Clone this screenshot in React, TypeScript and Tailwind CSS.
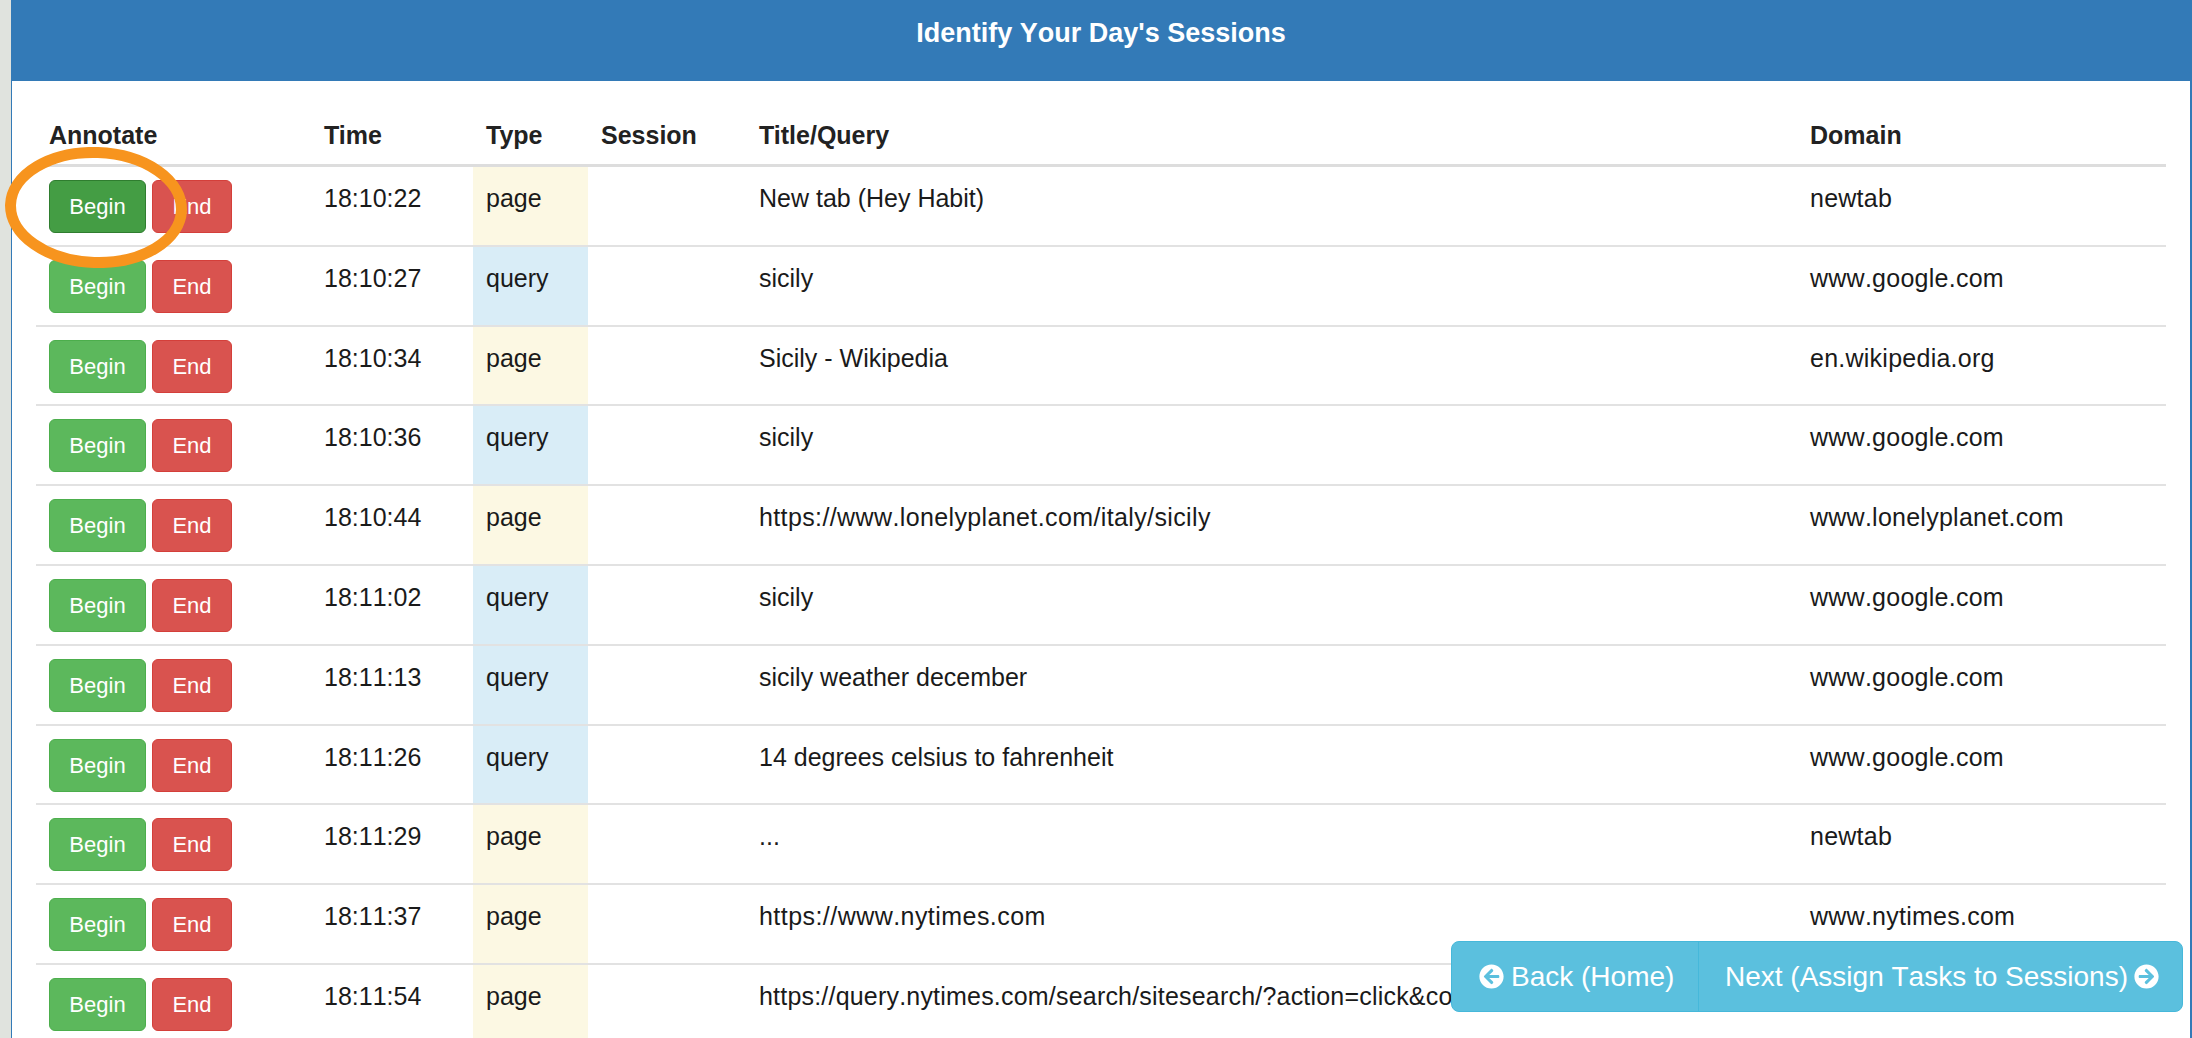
import React from 'react';
import { FaArrowCircleLeft, FaArrowCircleRight } from 'react-icons/fa';

const rows = [
    { time: '18:10:22', type: 'page', title: 'New tab (Hey Habit)', domain: 'newtab' },
    { time: '18:10:27', type: 'query', title: 'sicily', domain: 'www.google.com' },
    { time: '18:10:34', type: 'page', title: 'Sicily - Wikipedia', domain: 'en.wikipedia.org' },
    { time: '18:10:36', type: 'query', title: 'sicily', domain: 'www.google.com' },
    { time: '18:10:44', type: 'page', title: 'https://www.lonelyplanet.com/italy/sicily', domain: 'www.lonelyplanet.com', spacing: 'tracking-[0.38px]' },
    { time: '18:11:02', type: 'query', title: 'sicily', domain: 'www.google.com' },
    { time: '18:11:13', type: 'query', title: 'sicily weather december', domain: 'www.google.com' },
    { time: '18:11:26', type: 'query', title: '14 degrees celsius to fahrenheit', domain: 'www.google.com' },
    { time: '18:11:29', type: 'page', title: '...', domain: 'newtab' },
    { time: '18:11:37', type: 'page', title: 'https://www.nytimes.com', domain: 'www.nytimes.com', spacing: 'tracking-[0.45px]' },
    { time: '18:11:54', type: 'page', title: 'https://query.nytimes.com/search/sitesearch/?action=click&co', domain: '', spacing: 'tracking-[0.2px]' },
];

const columns = 'grid grid-cols-[276px_161px_115px_158px_1052px_368px]';

export default function App() {
    return (
        <div className="relative h-[1038px] w-[2192px] overflow-hidden bg-[#e0e3de] font-['Liberation_Sans',Arial,sans-serif] text-[25px] leading-[28px] text-[#1a1a1a] [font-kerning:none]">
            <div className="ml-[11px] h-full border-r-2 border-l-[1px] border-[#337ab7] bg-white">
                {/* Panel heading */}
                <div className="flex h-[81px] items-center justify-center bg-[#337ab7] pb-[16px] text-[27px] font-bold text-white">
                    Identify Your Day's Sessions
                </div>

                <div className="ml-[24px] w-[2130px] pt-[40px]">
                    {/* Header */}
                    <div className={`${columns} h-[46px] border-b-[3px] border-[#dddddd] font-bold text-[#222222] [font-kerning:normal]`}>
                        <span className="pl-[13px]">Annotate</span>
                        <span className="pl-[12px]">Time</span>
                        <span className="pl-[13px]">Type</span>
                        <span className="pl-[13px]">Session</span>
                        <span className="pl-[13px]">Title/Query</span>
                        <span className="pl-[12px]">Domain</span>
                    </div>

                    {rows.map((row, i) => (
                        <div key={i} className={`${columns} h-[79.8px] border-b-2 border-[#e2e2e2]`}>
                            <div className="flex gap-[6px] pl-[13px] pt-[13px]">
                                <button className={`h-[53px] w-[97px] rounded-[6px] border pt-[1px] text-[22px] text-white ${i === 0 ? 'border-[#2f7d2f] bg-[#449d44]' : 'border-[#4cae4c] bg-[#5cb85c]'}`}>
                                    Begin
                                </button>
                                <button className="h-[53px] w-[80px] rounded-[6px] border border-[#d43f3a] bg-[#d9534f] pt-[1px] text-[22px] text-white">
                                    End
                                </button>
                            </div>
                            <div className="pl-[12px] pt-[17px]">{row.time}</div>
                            <div className={`pl-[13px] pt-[17px] ${row.type === 'page' ? 'bg-[#fcf8e3]' : 'bg-[#d9edf7]'}`}>{row.type}</div>
                            <div />
                            <div className={`whitespace-nowrap pl-[13px] pt-[17px] ${row.spacing ?? ''}`}>{row.title}</div>
                            <div className="pl-[12px] pt-[17px] tracking-[0.25px]">{row.domain}</div>
                        </div>
                    ))}
                </div>
            </div>

            {/* Highlight drawn over the first Begin button */}
            <svg className="absolute left-[5px] top-[147px]" width="182" height="121" viewBox="0 0 182 121" fill="none">
                <ellipse cx="91" cy="60.5" rx="85.5" ry="55" stroke="#f7941e" strokeWidth="11" transform="rotate(2 91 60.5)" />
            </svg>

            {/* Floating navigation */}
            <div className="absolute left-[1451px] top-[941px] flex h-[71px] w-[732px] rounded-[8px] border border-[#46b8da] bg-[#5bc0de] text-[28px] text-white">
                <div className="flex w-[247px] items-center gap-[7px] border-r border-[#46b8da] pl-[27px]">
                    <FaArrowCircleLeft className="h-[25px] w-[25px]" />
                    <span>Back (Home)</span>
                </div>
                <div className="flex flex-1 items-center gap-[6px] pl-[26px]">
                    <span>Next (Assign Tasks to Sessions)</span>
                    <FaArrowCircleRight className="h-[25px] w-[25px]" />
                </div>
            </div>
        </div>
    );
}
